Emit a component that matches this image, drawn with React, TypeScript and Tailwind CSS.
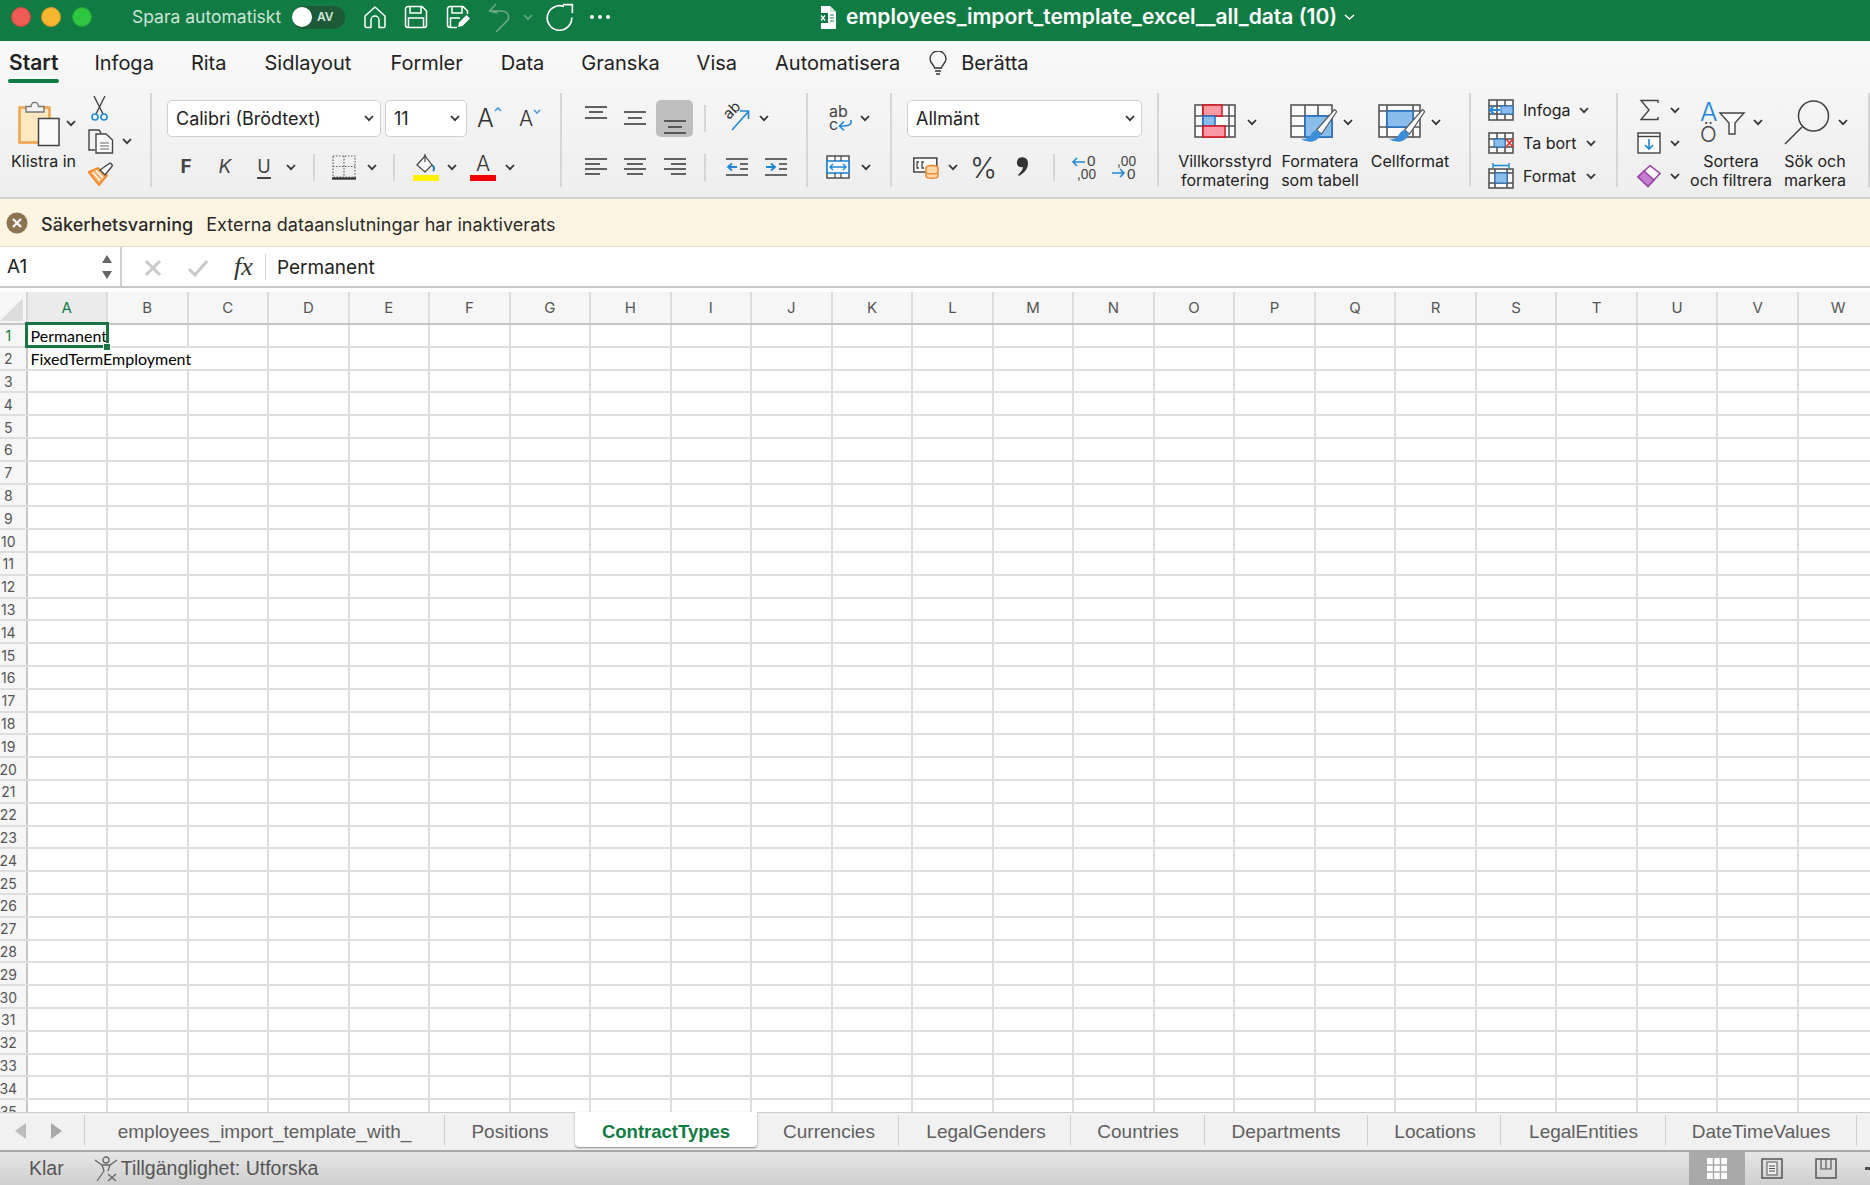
import React from "react";

const columnas = "ABCDEFGHIJKLMNOPQRSTUVW".split("");
const filas = Array.from({ length: 35 }, (_, i) => i + 1);

const Chev = ({ className = "" }: { className?: string }) => (
  <svg width="10" height="7" viewBox="0 0 10 7" className={`shrink-0 ${className}`}>
    <path d="M1 1 L5 5.2 L9 1" fill="none" stroke="#333" strokeWidth="1.8" />
  </svg>
);

const Sep = ({ className = "" }: { className?: string }) => <div className={`h-[27px] w-[2px] shrink-0 bg-[#d6d6d6] ${className}`} />;

// tiras de linhas para os botoes de alinhamento
const Lineas = ({ y, w }: { y: number[]; w: [number, number][] }) => (
  <svg width="22" height="22" viewBox="0 0 22 22" className="shrink-0">
    {y.map((v, i) => (
      <path key={i} d={`M${w[i][0]} ${v} H${w[i][1]}`} stroke="#3d3d3d" strokeWidth="1.6" />
    ))}
  </svg>
);

const Tabla = ({ x, y, w, h, cols, rows }: { x: number; y: number; w: number; h: number; cols: number[]; rows: number[] }) => (
  <g fill="none" stroke="#555" strokeWidth="1.6">
    <rect x={x} y={y} width={w} height={h} fill="#fbfbfb" />
    {cols.map((c) => (
      <path key={`c${c}`} d={`M${c} ${y} V${y + h}`} />
    ))}
    {rows.map((r) => (
      <path key={`r${r}`} d={`M${x} ${r} H${x + w}`} />
    ))}
  </g>
);

const Pincel = () => (
  <g>
    <path d="M44.5 9.5 L46.8 11.6 L31.5 34 L26.5 30 Z" fill="#fafafa" stroke="#555" strokeWidth="1.2" />
    <path d="M26.5 30 C22.5 31 21.5 34 20 36 C18 38.6 14 39.6 11 38.6 C14 42 24.5 43.6 28.5 38 C30 36 31.5 34 31.5 34 Z" fill="#3c8ed8" />
  </g>
);

export default function App() {
  const txt = "font-['Inter',sans-serif] text-[16px] leading-[19px] text-[#222]";
  return (
    <div className="flex h-[1185px] w-[1870px] flex-col overflow-hidden bg-white font-['Inter',sans-serif]">
      {/* barra de titulo */}
      <header className="flex h-[41px] shrink-0 items-center bg-[#107b43] pb-[7px]">
        <div className="ml-[11px] h-[20px] w-[20px] rounded-full border border-[#c9473f] bg-[#ee5c54]" />
        <div className="ml-[10px] h-[20px] w-[20px] rounded-full border border-[#d1962a] bg-[#f6b62f]" />
        <div className="ml-[11px] h-[20px] w-[20px] rounded-full border border-[#25a336] bg-[#2ec641]" />
        <span className="ml-[40px] w-[149px] whitespace-nowrap text-[17.5px] text-[#cfe4d8]">Spara automatiskt</span>
        <div className="ml-[11px] flex h-[23px] w-[53px] items-center rounded-full bg-[#1c5a38]">
          <div className="h-[20px] w-[20px] rounded-full bg-white" />
          <span className="ml-[5px] text-[12px] font-semibold text-[#d6e6dc]">AV</span>
        </div>
        <svg width="24" height="24" viewBox="0 0 24 24" className="ml-[18px] shrink-0">
          <path d="M2 11 L12 2 L22 11 V21 a1.5 1.5 0 0 1 -1.5 1.5 H16 V15 a4 4 0 0 0 -8 0 V22.5 H3.5 A1.5 1.5 0 0 1 2 21 Z" fill="none" stroke="#fff" strokeWidth="1.5" strokeLinejoin="round" />
        </svg>
        <svg width="24" height="24" viewBox="0 0 24 24" className="ml-[17px] shrink-0">
          <path d="M1.5 4 a2.5 2.5 0 0 1 2.5 -2.5 H18 L22.5 6 V20 a2.5 2.5 0 0 1 -2.5 2.5 H4 A2.5 2.5 0 0 1 1.5 20 Z M6 1.5 V8 H17 V1.5 M4.5 22.5 V13 H19.5 V22.5" fill="none" stroke="#fff" strokeWidth="1.5" />
        </svg>
        <svg width="24" height="24" viewBox="0 0 24 24" className="ml-[18px] shrink-0">
          <path d="M11 22.5 H4 A2.5 2.5 0 0 1 1.5 20 V4 a2.5 2.5 0 0 1 2.5 -2.5 H17 L21.5 6 V9 M6 1.5 V8 H16 V1.5 M4.5 22 V13 H14" fill="none" stroke="#fff" strokeWidth="1.5" />
          <path d="M12 22 L13 17.5 L20.5 10 L24 13.5 L16.5 21 Z" fill="#fff" />
        </svg>
        <svg width="22" height="31" viewBox="0 0 22 31" className="ml-[18px] shrink-0">
          <path d="M8 2 L1.5 9 L9.5 11 M1.5 9 H13 C19 9 22 13 20 18 L8 30" fill="none" stroke="#6aa987" strokeWidth="1.6" />
        </svg>
        <svg width="10" height="7" viewBox="0 0 10 7" className="ml-[13px] shrink-0">
          <path d="M1 1 L5 5 L9 1" fill="none" stroke="#6aa987" strokeWidth="1.6" />
        </svg>
        <svg width="29" height="29" viewBox="0 0 26 26" className="ml-[12px] shrink-0">
          <path d="M17 3.2 A11 11 0 1 0 24 13" fill="none" stroke="#fff" strokeWidth="1.5" />
          <path d="M16 1.5 H24.5 V9" fill="none" stroke="#fff" strokeWidth="1.5" />
        </svg>
        <div className="ml-[16px] flex gap-[4px]">
          <div className="h-[4px] w-[4px] rounded-full bg-white" />
          <div className="h-[4px] w-[4px] rounded-full bg-white" />
          <div className="h-[4px] w-[4px] rounded-full bg-white" />
        </div>
        <svg width="18" height="23" viewBox="0 0 18 23" className="ml-[208px] shrink-0">
          <path d="M3 0 H12 L18 6 V23 H3 Z" fill="#fff" />
          <path d="M12 0 L18 6 H12 Z" fill="#cfe4d8" />
          <rect x="0" y="7" width="10" height="10" fill="#107b43" />
          <path d="M3 9.5 L7 14.5 M7 9.5 L3 14.5" stroke="#fff" strokeWidth="1.3" />
          <path d="M12 9 H16 M12 12 H16 M12 15 H16" stroke="#6aa987" strokeWidth="1.4" />
        </svg>
        <span className="ml-[10px] whitespace-nowrap text-[21px] font-semibold text-white">employees_import_template_excel__all_data (10)</span>
        <svg width="11" height="7" viewBox="0 0 11 7" className="ml-[7px] shrink-0">
          <path d="M1 1 L5.5 5 L10 1" fill="none" stroke="#fff" strokeWidth="1.6" />
        </svg>
      </header>

      <div className="h-[158px] shrink-0 border-b-2 border-[#d2d2d2] bg-linear-to-b from-[#f9f9f9] to-[#eeeeee]">
        {/* abas */}
        <nav className="relative flex h-[43px] items-center gap-[37px] pl-[9px] pt-[1px] text-[20px] text-[#222]">
          <span className="text-[21px] font-semibold">Start</span>
          <span className="-ml-[1px]">Infoga</span>
          <span>Rita</span>
          <span className="ml-[1px]">Sidlayout</span>
          <span className="ml-[2px]">Formler</span>
          <span className="ml-[1px]">Data</span>
          <span>Granska</span>
          <span>Visa</span>
          <span className="ml-[1px]">Automatisera</span>
          <span className="-ml-[8px] flex items-center gap-[14px]">
            <svg width="18" height="24" viewBox="0 0 18 24" className="shrink-0">
              <path d="M5.5 17 C5 13.5 1 12 1 8 A8 8 0 0 1 17 8 C17 12 13 13.5 12.5 17 Z M6 20 H12 M7 23 H11" fill="none" stroke="#333" strokeWidth="1.3" />
            </svg>
            Berätta
          </span>
          <div className="absolute left-[8px] top-[38px] h-[4px] w-[51px] rounded-full bg-[#107b43]" />
        </nav>

        {/* faixa de opcoes */}
        <div className="box-content flex h-[94px] pt-[9px]">
          {/* urklipp */}
          <section className="flex h-[94px] w-[152px] shrink-0 border-r-2 border-[#d6d6d6]">
            <div className="w-[84px] shrink-0 pt-[6px]">
              <div className="flex h-[48px] items-center">
                <svg width="44" height="48" viewBox="0 0 44 48" className="ml-[17px] shrink-0">
                  <rect x="2.5" y="8.5" width="30" height="35" fill="#fde8bf" stroke="#f0a24e" strokeWidth="2.5" />
                  <path d="M9 13 V7.5 H14 C14.5 2 21 2 21.5 7.5 H27 V13 Z" fill="#f3f3f3" stroke="#777" strokeWidth="1.4" />
                  <rect x="21.5" y="19.5" width="20.5" height="27" fill="#fafafa" stroke="#444" strokeWidth="1.5" />
                </svg>
                <Chev className="ml-[5px]" />
              </div>
              <div className={`${txt} ml-[11px] mt-[5px] whitespace-nowrap`}>Klistra in</div>
            </div>
            <div className="flex flex-col pt-[3px]">
              <svg width="20" height="26" viewBox="0 0 20 26" className="ml-[6px] shrink-0">
                <path d="M4 0 L13 18 M15 0 L6 18" stroke="#444" strokeWidth="1.4" />
                <circle cx="5" cy="21" r="3" fill="none" stroke="#1e88d6" strokeWidth="1.6" />
                <circle cx="14" cy="21" r="3" fill="none" stroke="#1e88d6" strokeWidth="1.6" />
              </svg>
              <div className="mt-[7px] flex items-center">
                <svg width="26" height="25" viewBox="0 0 26 25" className="ml-[4px] shrink-0">
                  <path d="M7 21 H1 V1 H11 L13 4" fill="none" stroke="#444" strokeWidth="1.4" />
                  <path d="M8 5 H18 L24.5 11 V24 H8 Z" fill="#fbfbfb" stroke="#444" strokeWidth="1.4" />
                  <path d="M12 14 H21 M12 17 H21 M12 20 H21" stroke="#666" strokeWidth="1" />
                </svg>
                <Chev className="ml-[8px]" />
              </div>
              <svg width="25" height="24" viewBox="0 0 25 24" className="ml-[4px] mt-[8px] shrink-0">
                <path d="M0.5 10 L11 23 L19 13.5 L10 6 Z" fill="#f9b26e" stroke="#f0872a" strokeWidth="1.8" />
                <path d="M5 10.5 L12 18.5 M8 8.5 L15 16" stroke="#fff" strokeWidth="1.3" />
                <path d="M12 8 L17 13 L23.5 5 A2 2 0 0 0 20.5 2 Z" fill="#fafafa" stroke="#444" strokeWidth="1.3" />
              </svg>
            </div>
          </section>

          {/* tecken */}
          <section className="h-[94px] w-[410px] shrink-0 border-r-2 border-[#d6d6d6] pt-[7px]">
            <div className="flex h-[37px] items-center">
              <div className="ml-[15px] flex h-[37px] w-[214px] items-center justify-between rounded-[5px] border border-[#cfcfcf] bg-white pl-[8px] pr-[6px] text-[18px] text-[#222]">
                Calibri (Brödtext)
                <Chev />
              </div>
              <div className="ml-[4px] flex h-[37px] w-[82px] items-center justify-between rounded-[5px] border border-[#cfcfcf] bg-white pl-[8px] pr-[6px] text-[18px] text-[#222]">
                11
                <Chev />
              </div>
              <span className="ml-[10px] flex w-[24px] items-start text-[25px] font-light leading-none text-[#333]">
                A
                <svg width="8" height="5" viewBox="0 0 8 5" className="mt-[1px] shrink-0">
                  <path d="M1 4 L4 1 L7 4" fill="none" stroke="#2f8fd8" strokeWidth="1.3" />
                </svg>
              </span>
              <span className="ml-[18px] flex w-[22px] items-start text-[21px] font-light leading-none text-[#333]">
                A
                <svg width="8" height="5" viewBox="0 0 8 5" className="mt-[1px] shrink-0">
                  <path d="M1 1 L4 4 L7 1" fill="none" stroke="#2f8fd8" strokeWidth="1.3" />
                </svg>
              </span>
            </div>
            <div className="mt-[13px] flex h-[34px] items-center">
              <span className="ml-[28px] w-[12px] text-center text-[19px] font-bold text-[#444]">F</span>
              <span className="ml-[26px] w-[14px] text-center text-[19px] italic text-[#444]">K</span>
              <span className="ml-[25px] w-[14px] border-b-2 border-[#444] text-center text-[18px] leading-[21px] text-[#444]">U</span>
              <Chev className="ml-[15px]" />
              <Sep className="ml-[17px]" />
              <svg width="24" height="25" viewBox="0 0 24 25" className="ml-[17px] shrink-0">
                <path d="M1 1 H23 V22 H1 Z M12 1 V22 M1 11.5 H23" fill="none" stroke="#666" strokeWidth="1.2" strokeDasharray="1.5 1.5" />
                <path d="M0 23.5 H24" stroke="#333" strokeWidth="2.4" />
              </svg>
              <Chev className="ml-[11px]" />
              <Sep className="ml-[16px]" />
              <svg width="26" height="28" viewBox="0 0 26 28" className="ml-[18px] shrink-0">
                <path d="M4 12 L12 3 L19 12 L12 19 Z" fill="#fafafa" stroke="#444" strokeWidth="1.2" />
                <path d="M12 1 V9" stroke="#444" strokeWidth="1.2" />
                <path d="M19 12 C22 14 21 17 20 18" fill="none" stroke="#2577c4" strokeWidth="2" />
                <rect x="0" y="22" width="26" height="6" fill="#fff200" />
              </svg>
              <Chev className="ml-[8px]" />
              <span className="ml-[13px] flex h-[28px] w-[26px] flex-col items-center justify-between">
                <span className="text-[21px] font-light leading-[21px] text-[#333]">A</span>
                <span className="h-[6px] w-[26px] bg-[#f00000]" />
              </span>
              <Chev className="ml-[9px]" />
            </div>
          </section>

          {/* justering */}
          <section className="h-[94px] w-[246px] shrink-0 border-r-2 border-[#d6d6d6] pt-[7px]">
            <div className="flex h-[37px] items-center">
              <div className="ml-[23px] -mt-[6px]">
                <Lineas y={[2, 7, 13]} w={[[0, 22], [4, 18], [0, 22]]} />
              </div>
              <div className="ml-[17px] -mt-[1px]">
                <Lineas y={[5, 11, 17]} w={[[0, 22], [4, 18], [0, 22]]} />
              </div>
              <div className="ml-[10px] flex h-[37px] w-[37px] shrink-0 items-end justify-center rounded-[5px] bg-[#bfbfbf] pb-[1px]">
                <Lineas y={[7, 13, 19]} w={[[0, 22], [4, 18], [0, 22]]} />
              </div>
              <Sep className="ml-[11px]" />
              <svg width="27" height="28" viewBox="0 0 27 28" className="ml-[17px] shrink-0 overflow-visible">
                <text x="6" y="15" transform="rotate(-45 6 15)" fontFamily="Inter, sans-serif" fontSize="15" fill="#333">ab</text>
                <path d="M9 25 L25 7 M17 6 H25.5 V14" fill="none" stroke="#1e88d6" strokeWidth="1.6" />
              </svg>
              <Chev className="ml-[9px]" />
            </div>
            <div className="mt-[13px] flex h-[34px] items-center">
              <div className="ml-[23px]">
                <Lineas y={[3, 8, 13, 18]} w={[[0, 22], [0, 15], [0, 22], [0, 15]]} />
              </div>
              <div className="ml-[17px]">
                <Lineas y={[3, 8, 13, 18]} w={[[0, 22], [3, 19], [0, 22], [3, 19]]} />
              </div>
              <div className="ml-[18px]">
                <Lineas y={[3, 8, 13, 18]} w={[[0, 22], [7, 22], [0, 22], [7, 22]]} />
              </div>
              <Sep className="ml-[18px]" />
              <svg width="22" height="22" viewBox="0 0 22 22" className="ml-[20px] shrink-0">
                <path d="M0 3 H22 M14 8 H22 M14 13 H22 M0 19 H22" stroke="#3d3d3d" strokeWidth="1.6" />
                <path d="M11 11 H2 M6 7.5 L2 11 L6 14.5" fill="none" stroke="#1e88d6" strokeWidth="1.8" />
              </svg>
              <svg width="22" height="22" viewBox="0 0 22 22" className="ml-[17px] shrink-0">
                <path d="M0 3 H22 M14 8 H22 M14 13 H22 M0 19 H22" stroke="#3d3d3d" strokeWidth="1.6" />
                <path d="M1 11 H10 M6 7.5 L10 11 L6 14.5" fill="none" stroke="#1e88d6" strokeWidth="1.8" />
              </svg>
            </div>
          </section>

          {/* radbrytning */}
          <section className="h-[94px] w-[84px] shrink-0 border-r-2 border-[#d6d6d6] pt-[7px]">
            <div className="flex h-[37px] items-center">
              <svg width="24" height="27" viewBox="0 0 24 27" className="ml-[21px] shrink-0 overflow-visible">
                <text x="0" y="12" fontFamily="Inter, sans-serif" fontSize="16" fill="#444">ab</text>
                <text x="0" y="25" fontFamily="Inter, sans-serif" fontSize="16" fill="#444">c</text>
                <path d="M22 15 C23 21 18 21 11 21 M15 16.5 L10.5 21 L15 25.5" fill="none" stroke="#1e88d6" strokeWidth="1.6" />
              </svg>
              <Chev className="ml-[7px]" />
            </div>
            <div className="mt-[13px] flex h-[34px] items-center">
              <svg width="24" height="24" viewBox="0 0 24 24" className="ml-[18px] shrink-0">
                <rect x="1" y="1" width="22" height="22" fill="#fbfbfb" stroke="#444" strokeWidth="1.4" />
                <rect x="1" y="6" width="22" height="12" fill="#fbfbfb" stroke="#1e88d6" strokeWidth="1.6" />
                <path d="M9 1 V6 M15 1 V6 M9 18 V23 M15 18 V23" stroke="#444" strokeWidth="1.2" />
                <path d="M4 12 H20 M7 9 L4 12 L7 15 M17 9 L20 12 L17 15" fill="none" stroke="#1e88d6" strokeWidth="1.4" />
              </svg>
              <Chev className="ml-[11px]" />
            </div>
          </section>

          {/* tal */}
          <section className="h-[94px] w-[267px] shrink-0 border-r-2 border-[#d6d6d6] pt-[7px]">
            <div className="flex h-[37px] items-center">
              <div className="ml-[15px] flex h-[37px] w-[235px] items-center justify-between rounded-[5px] border border-[#cfcfcf] bg-white pl-[8px] pr-[6px] text-[18px] text-[#222]">
                Allmänt
                <Chev />
              </div>
            </div>
            <div className="mt-[13px] flex h-[34px] items-center">
              <svg width="26" height="24" viewBox="0 0 26 24" className="ml-[21px] shrink-0">
                <rect x="0.8" y="3" width="23" height="14" fill="#fbfbfb" stroke="#444" strokeWidth="1.5" />
                <path d="M6 7 H4 V13 H6 M11 7 H9 V13 H11" fill="none" stroke="#444" strokeWidth="1.3" />
                <ellipse cx="19" cy="13" rx="6" ry="2.5" fill="#fbd9a8" stroke="#f0872a" strokeWidth="1.4" />
                <path d="M13 13 V21 C13 24 25 24 25 21 V13 M13 17 C13 19.5 25 19.5 25 17" fill="#fbd9a8" stroke="#f0872a" strokeWidth="1.4" />
              </svg>
              <Chev className="ml-[9px]" />
              <span className="ml-[12px] w-[24px] text-center text-[29px] font-light leading-none text-[#333]">%</span>
              <svg width="14" height="22" viewBox="0 0 14 22" className="ml-[22px] shrink-0">
                <path d="M3 2 C7 0 12 2 12 7 C12 13 8 17 3 20 L2 19 C5 16 7 13 7 11 C3 12 0.5 9.5 1 6 C1.2 4 2 3 3 2 Z" fill="#333" />
              </svg>
              <Sep className="ml-[23px]" />
              <svg width="24" height="26" viewBox="0 0 24 26" className="ml-[17px] shrink-0 overflow-visible">
                <text x="15" y="12" fontFamily="Liberation Sans, sans-serif" fontSize="15" textLength="8.5" lengthAdjust="spacingAndGlyphs" fill="#444">0</text>
                <text x="5" y="25" fontFamily="Liberation Sans, sans-serif" fontSize="15" textLength="19" lengthAdjust="spacingAndGlyphs" fill="#444">,00</text>
                <path d="M1 8 H13 M5 4 L1 8 L5 12" fill="none" stroke="#1e88d6" strokeWidth="1.5" />
              </svg>
              <svg width="24" height="26" viewBox="0 0 24 26" className="ml-[16px] shrink-0 overflow-visible">
                <text x="5" y="12" fontFamily="Liberation Sans, sans-serif" fontSize="15" textLength="19" lengthAdjust="spacingAndGlyphs" fill="#444">,00</text>
                <text x="15" y="25" fontFamily="Liberation Sans, sans-serif" fontSize="15" textLength="8.5" lengthAdjust="spacingAndGlyphs" fill="#444">0</text>
                <path d="M0 19 H12 M8 15 L12 19 L8 23" fill="none" stroke="#1e88d6" strokeWidth="1.5" />
              </svg>
            </div>
          </section>

          {/* format */}
          <section className="flex h-[94px] w-[312px] shrink-0 border-r-2 border-[#d6d6d6] pl-[13px] pt-[7px]">
            <div className="w-[106px] shrink-0">
              <div className="flex h-[45px] items-center">
                <svg width="42" height="45" viewBox="0 0 42 45" className="ml-[22px] shrink-0">
                  <Tabla x={1} y={5} w={40} h={32} cols={[9, 35]} rows={[16, 26]} />
                  <rect x="9" y="5" width="19" height="11" fill="#fb9aa4" stroke="#d8121f" strokeWidth="1.5" />
                  <rect x="9" y="16" width="12" height="10" fill="#8abdeb" stroke="#1f6ec4" strokeWidth="1.5" />
                  <rect x="9" y="26" width="22" height="11" fill="#fb9aa4" stroke="#d8121f" strokeWidth="1.5" />
                </svg>
                <Chev className="ml-[11px]" />
              </div>
              <div className={`${txt} mt-[7px] whitespace-nowrap text-center`}>
                Villkorsstyrd<br />formatering
              </div>
            </div>
            <div className="w-[84px] shrink-0">
              <div className="flex h-[45px] items-center">
                <svg width="47" height="45" viewBox="0 0 47 45" className="ml-[12px] shrink-0">
                  <Tabla x={1} y={5} w={41} h={32} cols={[15, 28]} rows={[16, 26]} />
                  <rect x="15" y="16" width="27" height="21" fill="#8abdeb" stroke="#1f6ec4" strokeWidth="1.5" />
                  <Pincel />
                </svg>
                <Chev className="ml-[6px]" />
              </div>
              <div className={`${txt} mt-[7px] whitespace-nowrap text-center`}>
                Formatera<br />som tabell
              </div>
            </div>
            <div className="w-[96px] shrink-0">
              <div className="flex h-[45px] items-center">
                <svg width="47" height="45" viewBox="0 0 47 45" className="ml-[16px] shrink-0">
                  <Tabla x={1} y={5} w={41} h={32} cols={[9, 35]} rows={[11, 27]} />
                  <rect x="9" y="11" width="26" height="16" fill="#8abdeb" stroke="#1f6ec4" strokeWidth="1.5" />
                  <Pincel />
                </svg>
                <Chev className="ml-[6px]" />
              </div>
              <div className={`${txt} mt-[7px] whitespace-nowrap text-center`}>Cellformat</div>
            </div>
          </section>

          {/* celler */}
          <section className="flex h-[94px] w-[147px] shrink-0 flex-col border-r-2 border-[#d6d6d6]">
            <div className="flex h-[34px] shrink-0 items-center">
              <svg width="26" height="24" viewBox="0 0 26 24" className="ml-[17px] shrink-0">
                <Tabla x={1} y={2} w={24} h={20} cols={[9, 17]} rows={[8, 16]} />
                <rect x="13" y="8" width="12" height="8" fill="#8abdeb" stroke="#1f6ec4" />
                <path d="M12 12 H2 M6 8 L2 12 L6 16" fill="none" stroke="#1e88d6" strokeWidth="1.8" />
              </svg>
              <span className={`${txt} ml-[9px] w-[56px]`}>Infoga</span>
              <Chev />
            </div>
            <div className="flex h-[32px] shrink-0 items-center">
              <svg width="26" height="24" viewBox="0 0 26 24" className="ml-[17px] shrink-0">
                <Tabla x={1} y={2} w={24} h={20} cols={[9, 17]} rows={[8, 16]} />
                <rect x="6" y="8" width="11" height="8" fill="#8abdeb" stroke="#1f6ec4" />
                <path d="M18 8 L25 16 M25 8 L18 16" stroke="#ea2b2b" strokeWidth="1.6" />
              </svg>
              <span className={`${txt} ml-[9px] w-[63px]`}>Ta bort</span>
              <Chev />
            </div>
            <div className="flex h-[34px] shrink-0 items-center">
              <svg width="26" height="26" viewBox="0 0 26 26" className="ml-[17px] shrink-0">
                <Tabla x={1} y={6} w={24} h={19} cols={[7, 19]} rows={[10, 20]} />
                <rect x="7" y="10" width="12" height="10" fill="#8abdeb" stroke="#1f6ec4" />
                <path d="M5 2.5 H21 M5 0 V5 M21 0 V5" fill="none" stroke="#1e88d6" strokeWidth="1.4" />
              </svg>
              <span className={`${txt} ml-[9px] w-[63px]`}>Format</span>
              <Chev />
            </div>
          </section>

          {/* redigering */}
          <section className="flex h-[94px] w-[252px] shrink-0 border-r-2 border-[#d6d6d6]">
            <div className="flex w-[62px] shrink-0 flex-col">
              <div className="flex h-[34px] shrink-0 items-center">
                <svg width="24" height="22" viewBox="0 0 24 22" className="ml-[19px] shrink-0">
                  <path d="M21 4 V1.5 H4 L12 11 L4 20.5 H21 V18" fill="none" stroke="#444" strokeWidth="1.4" />
                </svg>
                <Chev className="ml-[9px]" />
              </div>
              <div className="flex h-[32px] shrink-0 items-center">
                <svg width="24" height="22" viewBox="0 0 24 22" className="ml-[19px] shrink-0">
                  <rect x="1" y="1" width="22" height="20" fill="#fbfbfb" stroke="#444" strokeWidth="1.4" />
                  <path d="M1 4.5 H23" stroke="#444" strokeWidth="1.4" />
                  <path d="M12 7 V17 M8 13 L12 17 L16 13" fill="none" stroke="#1e88d6" strokeWidth="1.6" />
                </svg>
                <Chev className="ml-[9px]" />
              </div>
              <div className="flex h-[34px] shrink-0 items-center">
                <svg width="24" height="24" viewBox="0 0 24 24" className="ml-[19px] shrink-0">
                  <path d="M1 13 L13 1.5 L23 9.5 L11 22.5 Z" fill="#fafafa" stroke="#9c3fa8" strokeWidth="1.5" />
                  <path d="M1 13 L7 7 L17 16 L11 22.5 Z" fill="#c57fd0" stroke="#9c3fa8" strokeWidth="1.5" />
                </svg>
                <Chev className="ml-[9px]" />
              </div>
            </div>
            <div className="ml-[10px] w-[82px] shrink-0 pt-[7px]">
              <div className="flex h-[45px] items-center">
                <svg width="46" height="45" viewBox="0 0 46 45" className="ml-[10px] shrink-0 overflow-visible">
                  <text x="0" y="21" fontFamily="Inter, sans-serif" fontSize="26" fontWeight="300" fill="#1e88d6">A</text>
                  <text x="0" y="42" fontFamily="Inter, sans-serif" fontSize="22" fontWeight="300" fill="#444">Ö</text>
                  <path d="M20 13 H44 L35 23 V34 H29 V23 Z" fill="#fbfbfb" stroke="#444" strokeWidth="1.4" />
                </svg>
                <Chev className="ml-[7px]" />
              </div>
              <div className={`${txt} mt-[7px] whitespace-nowrap text-center`}>
                Sortera<br />och filtrera
              </div>
            </div>
            <div className="ml-[5px] w-[76px] shrink-0 pt-[7px]">
              <div className="flex h-[45px] items-center">
                <svg width="46" height="45" viewBox="0 0 46 45" className="ml-[7px] shrink-0">
                  <circle cx="29.5" cy="16" r="15" fill="none" stroke="#444" strokeWidth="1.5" />
                  <path d="M1 44 L18 27" stroke="#444" strokeWidth="1.6" />
                </svg>
                <Chev className="ml-[8px]" />
              </div>
              <div className={`${txt} mt-[7px] whitespace-nowrap text-center`}>
                Sök och<br />markera
              </div>
            </div>
          </section>
        </div>
      </div>

      {/* aviso */}
      <div className="flex h-[48px] shrink-0 items-center border-b border-[#e2d9c6] bg-[#fdf4e1] text-[18px] tracking-[0.003em] text-[#2a2a2a]">
        <svg width="22" height="22" viewBox="0 0 22 22" className="ml-[6px] shrink-0">
          <circle cx="11" cy="11" r="10.5" fill="#8c7352" />
          <path d="M7 7 L15 15 M15 7 L7 15" stroke="#fff" strokeWidth="2.2" />
        </svg>
        <span className="ml-[13px] pt-[3px] font-medium">Säkerhetsvarning</span>
        <span className="ml-[13px] pt-[3px]">Externa dataanslutningar har inaktiverats</span>
      </div>

      {/* barra de formula */}
      <div className="flex h-[41px] shrink-0 items-center border-b-2 border-[#c8c8c8] bg-white">
        <div className="flex h-[39px] w-[122px] shrink-0 items-center justify-between border-r-2 border-[#cfcfcf] pl-[7px] pr-[7px] text-[19px] text-[#222]">
          <span className="pt-[1px]">A1</span>
          <svg width="12" height="30" viewBox="0 0 12 30">
            <path d="M6 3 L11 11 H1 Z M6 27 L11 19 H1 Z" fill="#666" />
          </svg>
        </div>
        <svg width="18" height="18" viewBox="0 0 18 18" className="ml-[22px] mt-[2px] shrink-0">
          <path d="M2 2 L16 16 M16 2 L2 16" stroke="#c9c9c9" strokeWidth="3" />
        </svg>
        <svg width="20" height="18" viewBox="0 0 20 18" className="ml-[26px] mt-[2px] shrink-0">
          <path d="M1 10 L7 16 L19 2" fill="none" stroke="#c9c9c9" strokeWidth="3" />
        </svg>
        <span className="ml-[26px] w-[26px] font-['Liberation_Serif',serif] text-[26px] italic text-[#333]">fx</span>
        <div className="ml-[5px] h-[26px] w-[1px] bg-[#d6d6d6]" />
        <span className="ml-[11px] pt-[4px] text-[19px] text-[#222]">Permanent</span>
      </div>

      {/* planilha */}
      <div className="relative min-h-0 flex-1 overflow-hidden pt-[4px]">
        <div className="flex h-[33px] border-b-2 border-[#c4c4c4] bg-[#f6f6f6]">
          <div className="flex w-[27.5px] shrink-0 items-end border-r-2 border-[#d6d6d6] pb-[1px]">
            <svg width="24" height="25" viewBox="0 0 24 25">
              <path d="M23 1 V24 H0 Z" fill="#dcdcdc" />
            </svg>
          </div>
          {columnas.map((c) => (
            <div
              key={c}
              className={
                c === "A"
                  ? "flex w-[80.52px] shrink-0 items-center justify-center border-r-2 border-[#dcdcdc] bg-[#ebebeb] pt-[1px] text-[15px] text-[#107b43]"
                  : "flex w-[80.52px] shrink-0 items-center justify-center border-r-2 border-[#dcdcdc] pt-[1px] text-[15px] text-[#555]"
              }
            >
              {c}
            </div>
          ))}
        </div>
        {filas.map((f) => (
          <div key={f} className="flex h-[22.8px] border-b-2 border-[#dedede]">
            <div
              className={
                f === 1
                  ? "flex w-[27.5px] shrink-0 items-center justify-center border-r-2 border-[#c8c8c8] bg-[#f6f6f6] pr-[9px] pt-[1px] text-[14px] text-[#107b43]"
                  : "flex w-[27.5px] shrink-0 items-center justify-center border-r-2 border-[#c8c8c8] bg-[#f6f6f6] pr-[9px] pt-[1px] text-[14px] text-[#555]"
              }
            >
              {f}
            </div>
            {columnas.map((c) => (
              <div
                key={c}
                className={
                  f === 2 && c === "A"
                    ? "relative z-10 flex w-[80.52px] shrink-0 items-center whitespace-nowrap pl-[3px] pt-[1px] font-['Lato',sans-serif] text-[16px] text-black"
                    : f === 2 && c === "B"
                      ? "flex w-[80.52px] shrink-0 items-center whitespace-nowrap pl-[3px] pt-[1px] font-['Lato',sans-serif] text-[16px] text-black"
                      : "flex w-[80.52px] shrink-0 items-center whitespace-nowrap border-r-2 border-[#dedede] pl-[3px] pt-[1px] font-['Lato',sans-serif] text-[16px] text-black"
                }
              >
                {f === 1 && c === "A" ? "Permanent" : f === 2 && c === "A" ? "FixedTermEmployment" : ""}
              </div>
            ))}
          </div>
        ))}
        <div className="absolute left-[25px] top-[34px] z-20 h-[26px] w-[84px] border-[3px] border-[#1a7343]">
          <div className="absolute -bottom-[6px] -right-[5px] h-[8px] w-[8px] border border-white bg-[#1a7343]" />
        </div>
      </div>

      {/* abas de planilhas */}
      <div className="relative z-30 flex h-[40px] shrink-0 border-b-2 border-t border-b-[#a8a8a8] border-t-[#cccccc] bg-[#f1f1f1] font-['Liberation_Sans',sans-serif] text-[19px] text-[#5f5f5f]">
        <div className="mt-[2px] flex h-[31px] w-[85px] shrink-0 items-center border-r border-[#cfcfcf]">
          <svg width="12" height="16" viewBox="0 0 12 16" className="ml-[15px] shrink-0">
            <path d="M11 0 L0 8 L11 16 Z" fill="#bcbcbc" />
          </svg>
          <svg width="12" height="16" viewBox="0 0 12 16" className="ml-[23px] shrink-0">
            <path d="M1 0 L12 8 L1 16 Z" fill="#a8a8a8" />
          </svg>
        </div>
        <div className="mt-[2px] flex h-[31px] w-[360px] shrink-0 items-center justify-center border-r border-[#cfcfcf] pt-[3px]">employees_import_template_with_</div>
        <div className="mt-[2px] flex h-[31px] w-[130px] shrink-0 items-center justify-center pt-[3px]">Positions</div>
        <div className="-mt-[1px] flex h-[35px] w-[182px] shrink-0 items-center justify-center rounded-b-[4px] bg-white pt-[5px] text-[18.5px] font-bold text-[#107b43] shadow-[0_1px_2px_rgba(0,0,0,0.45)]">ContractTypes</div>
        <div className="mt-[2px] flex h-[31px] w-[142px] shrink-0 items-center justify-center border-r border-[#cfcfcf] pl-[3px] pt-[3px]">Currencies</div>
        <div className="mt-[2px] flex h-[31px] w-[172px] shrink-0 items-center justify-center border-r border-[#cfcfcf] pl-[3px] pt-[3px]">LegalGenders</div>
        <div className="mt-[2px] flex h-[31px] w-[134px] shrink-0 items-center justify-center border-r border-[#cfcfcf] pl-[1px] pt-[3px]">Countries</div>
        <div className="mt-[2px] flex h-[31px] w-[163px] shrink-0 items-center justify-center border-r border-[#cfcfcf] pt-[3px]">Departments</div>
        <div className="mt-[2px] flex h-[31px] w-[133px] shrink-0 items-center justify-center border-r border-[#cfcfcf] pl-[2px] pt-[3px]">Locations</div>
        <div className="mt-[2px] flex h-[31px] w-[165px] shrink-0 items-center justify-center border-r border-[#cfcfcf] pl-[1px] pt-[3px]">LegalEntities</div>
        <div className="mt-[2px] flex h-[31px] w-[191px] shrink-0 items-center justify-center border-r border-[#cfcfcf] pt-[3px]">DateTimeValues</div>
      </div>

      {/* barra de status */}
      <footer className="relative z-30 flex h-[33px] shrink-0 items-center bg-linear-to-b from-[#e6e6e6] to-[#cfcfcf] font-['Liberation_Sans',sans-serif] text-[19.5px] text-[#555]">
        <span className="ml-[29px] pt-[1px]">Klar</span>
        <svg width="24" height="26" viewBox="0 0 24 26" className="ml-[30px] shrink-0">
          <circle cx="12" cy="4" r="3" fill="none" stroke="#666" strokeWidth="1.3" />
          <path d="M1 4 L8 9 H16 L23 4 M8 9 L10 15 L3 25 M16 9 L14 15 M14 18 L22 25 M22 18 L14 25" fill="none" stroke="#666" strokeWidth="1.3" />
        </svg>
        <span className="ml-[3px] pt-[1px]">Tillgänglighet: Utforska</span>
        <div className="ml-auto flex h-[33px] w-[56px] shrink-0 items-center justify-center bg-[#a9a9a9]">
          <svg width="20" height="21" viewBox="0 0 20 21">
            <rect width="20" height="21" fill="#fff" />
            <path d="M6.5 0 V21 M13.5 0 V21 M0 7 H20 M0 14 H20" stroke="#a9a9a9" strokeWidth="1.5" />
          </svg>
        </div>
        <div className="flex h-[33px] w-[54px] shrink-0 items-center justify-center">
          <svg width="22" height="21" viewBox="0 0 22 21">
            <rect x="1" y="1" width="20" height="19" fill="none" stroke="#555" strokeWidth="1.5" />
            <rect x="6" y="4" width="10" height="13" fill="#eee" stroke="#555" />
            <path d="M8 8 H14 M8 10.5 H14 M8 13 H14" stroke="#555" />
          </svg>
        </div>
        <div className="flex h-[33px] w-[54px] shrink-0 items-center justify-center">
          <svg width="22" height="21" viewBox="0 0 22 21">
            <rect x="1" y="1" width="20" height="19" fill="none" stroke="#555" strokeWidth="1.5" />
            <path d="M6 1 V11 H16 V1 M11 1 V11" fill="none" stroke="#555" strokeWidth="1.2" />
          </svg>
        </div>
        <div className="ml-[12px] h-[3px] w-[5px] shrink-0 bg-[#555]" />
      </footer>
    </div>
  );
}
